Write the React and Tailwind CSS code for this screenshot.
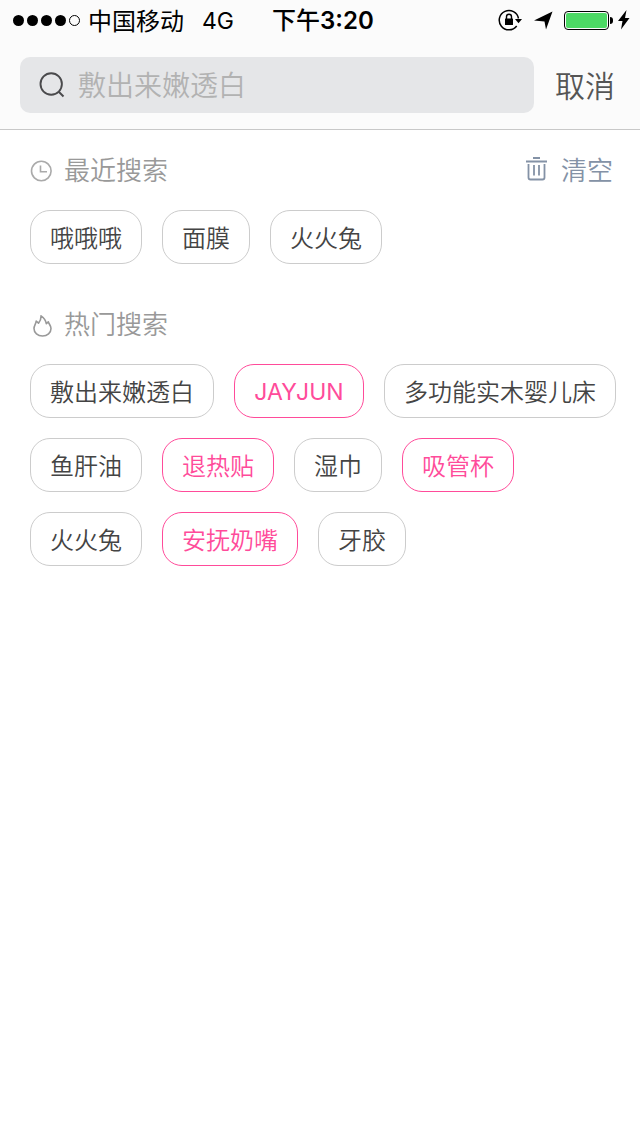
const cjk = "font-['Inter','Noto_Sans_CJK_SC',sans-serif]";

const recent = ["哦哦哦", "面膜", "火火兔"];
const hotRows = [
  [["敷出来嫩透白"], ["JAYJUN", true, "w-[130px] text-[23px] font-normal"], ["多功能实木婴儿床"]],
  [["鱼肝油"], ["退热贴", true], ["湿巾"], ["吸管杯", true]],
  [["火火兔"], ["安抚奶嘴", true], ["牙胶"]],
];

function Tag({ text, hot, size = "px-[19px] text-2xl font-[350]" }) {
  const tone = hot ? "border-[#ff4b9a] text-[#ff4b9a]" : "border-[#cccccc] text-[#444444]";
  return (
    <button className={`flex h-[54px] shrink-0 items-center justify-center whitespace-nowrap rounded-[20px] border bg-white pt-[3px] ${tone} ${size} leading-none`}>
      {text}
    </button>
  );
}

function StatusBar() {
  return (
    <div className="flex h-10 items-center pl-[13px] text-2xl leading-none text-black">
      <div className="flex w-[75px] items-center gap-[3px]">
        {[0, 1, 2, 3].map((i) => (
          <span key={i} className="size-[11px] rounded-full bg-black" />
        ))}
        <span className="size-[11px] rounded-full border border-black" />
      </div>
      <span className="w-[114px] pt-[3px]">中国移动</span>
      <span className="w-[70px] pt-0.5 text-[23px]">4G</span>
      <span className="flex w-[226px] items-center pt-0.5 font-medium">
        下午<span className="font-semibold">3:20</span>
      </span>
      <svg className="h-6 w-[25px]" viewBox="0 0 25 24" fill="none">
        <path d="M18.700 18A9.700 9.700 0 1 1 20.500 10.500" stroke="#000" strokeWidth="1.500" />
        <path d="M17 11h7l-3.500 4.200z" fill="#000" />
        <rect x="7" y="10.500" width="8" height="6.500" rx=".5" fill="#000" />
        <path d="M8.500 11V8.700a2.500 2.500 0 0 1 5 0V11" stroke="#000" strokeWidth="1.400" />
      </svg>
      <svg className="ml-[11px] h-5 w-5" viewBox="0 0 20 20">
        <path d="M18.500 1.500 12 19.500l-1.500-8L0 10.500z" fill="#000" />
      </svg>
      <div className="ml-[10px] flex items-center">
        <div className="h-[19px] w-[45px] rounded-[4px] border border-black p-px">
          <div className="h-full w-full rounded-[2px] bg-[#4cd964]" />
        </div>
        <div className="ml-px h-[7px] w-[3px] rounded-r-full bg-black" />
      </div>
      <svg className="ml-[5px] h-5 w-3" viewBox="0 0 12 20">
        <path d="M8.500 0 0 11h4.500L3 19.500 11.500 8H7z" fill="#000" />
      </svg>
    </div>
  );
}

export default function App() {
  return (
    <div className={`flex h-[1136px] w-[640px] flex-col overflow-hidden bg-white ${cjk}`}>
      <header className="flex h-[130px] shrink-0 flex-col border-b border-[#c8c8c8] bg-[#fbfbfb]">
        <StatusBar />
        <div className="mt-[17px] flex items-center pl-5">
          <div className="flex h-14 w-[514px] items-center rounded-[10px] bg-[#e5e6e8] pl-[19px]">
            <svg className="size-[26px]" viewBox="0 0 26 26" fill="none" stroke="#4a4a4c" strokeWidth="1.900">
              <circle cx="12.200" cy="12" r="10.700" />
              <path d="m19.500 19.500 5 5" />
            </svg>
            <span className="ml-[13px] pt-0.5 text-[28px] font-[350] leading-none text-[#b2b2b2]">敷出来嫩透白</span>
          </div>
          <button className="ml-[21px] pt-0.5 text-[30px] font-[350] leading-none text-[#555555]">取消</button>
        </div>
      </header>
      <main className="px-[30px]">
        <section>
          <div className="flex h-20 items-center text-[26px] font-[350] leading-none text-[#999999]">
            <svg className="mt-0.5 size-[22px]" viewBox="0 0 22 22" fill="none" stroke="#aaa" strokeWidth="1.600">
              <circle cx="11.300" cy="11" r="9.800" />
              <path d="M10.500 5.500v6.300h6.500" />
            </svg>
            <span className="ml-3 pt-0.5">最近搜索</span>
            <button className="-mr-[3px] ml-auto flex items-center text-[#8492a6]">
              <svg className="mr-[14px] h-6 w-[21px] -translate-y-px" viewBox="0 0 21 24" fill="none" stroke="#8492a6" strokeWidth="1.800">
                <path d="M0 4.500h21M7 1h7M2.500 7v13.500a2 2 0 0 0 2 2h12a2 2 0 0 0 2-2V7M8 8v10.500M13 8v10.500" />
              </svg>
              <span className="pt-0.5">清空</span>
            </button>
          </div>
          <div className="flex gap-5">
            {recent.map((text) => <Tag key={text} text={text} />)}
          </div>
        </section>
        <section className="mt-5">
          <div className="flex h-20 items-center text-[26px] font-[350] leading-none text-[#999999]">
            <svg className="mt-[3px] size-[22px]" viewBox="0 0 22 22" fill="none" stroke="#999" strokeWidth="1.600" strokeLinejoin="round">
              <path d="M11 .8C14 2.800 15.800 5.200 16.300 8.700L18.300 6.800C18.800 9 21 10.500 21 13.500C21 18 17.300 21 12.500 21S4 18 4 13.500C4 10.500 6 9 6.200 6L8.500 8.200C10.300 6 11.200 3.500 11 .8Z" />
            </svg>
            <span className="ml-3 pt-0.5">热门搜索</span>
          </div>
          <div className="flex flex-col gap-5">
            {hotRows.map((row, i) => (
              <div key={i} className="flex gap-5">
                {row.map(([text, hot, size]) => <Tag key={text} text={text} hot={hot} size={size} />)}
              </div>
            ))}
          </div>
        </section>
      </main>
    </div>
  );
}
